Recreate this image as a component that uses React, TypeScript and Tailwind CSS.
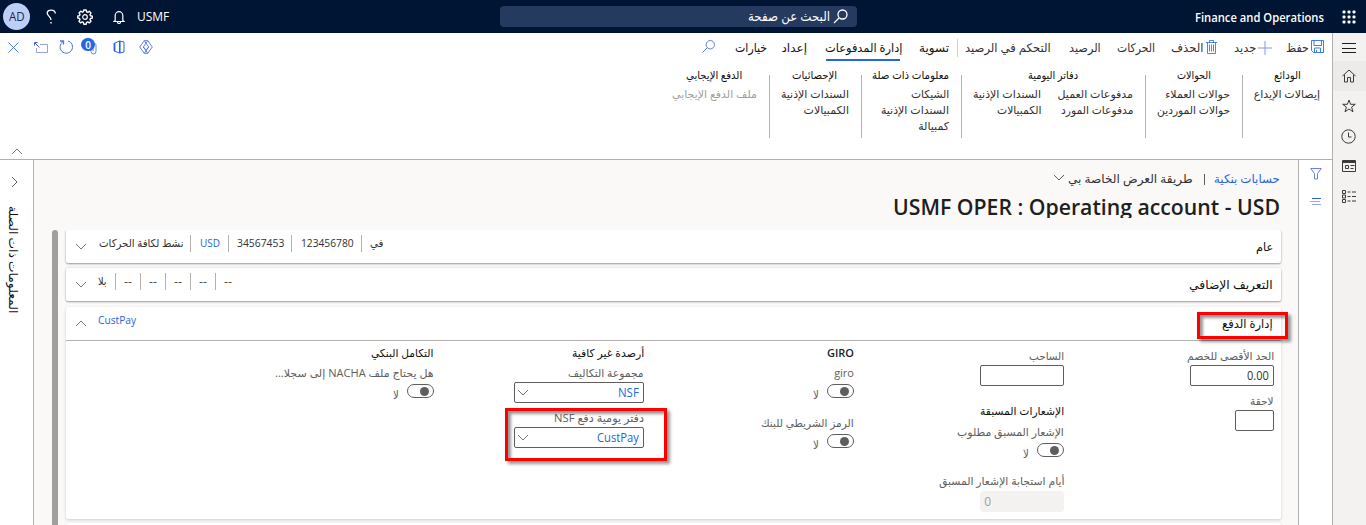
import React, { useLayoutEffect, useRef } from "react";

/** Text that is squeezed or stretched to a given width. */
function T({ w, c = "", v = false, ltr = false, children }: { w: number; c?: string; v?: boolean; ltr?: boolean; children: React.ReactNode }) {
  const ref = useRef<HTMLSpanElement>(null);
  useLayoutEffect(() => {
    const el = ref.current;
    if (!el) return;
    const n = v ? el.offsetHeight : el.offsetWidth;
    if (n) el.style.transform = v ? `scaleY(${w / n})` : `scaleX(${w / n})`;
  }, [w, v]);
  return (
    <span className={`flex shrink-0 whitespace-nowrap ${v ? "flex-row items-start" : ""} ${c}`} style={v ? { height: w } : { width: w }}>
      <span ref={ref} dir={ltr ? "ltr" : undefined} className={v ? "block shrink-0 origin-bottom" : ltr ? "block shrink-0 origin-left" : "block shrink-0 origin-right"}>
        {children}
      </span>
    </span>
  );
}

function Icon({ w, h, c = "", children }: { w: number; h: number; c?: string; children: React.ReactNode }) {
  return (
    <svg width={w} height={h} viewBox={`0 0 ${w} ${h}`} fill="none" stroke="currentColor" strokeWidth="1" className={`block shrink-0 ${c}`}>
      {children}
    </svg>
  );
}

function Chevron({ up = false, c = "text-[#797775]" }: { up?: boolean; c?: string }) {
  return (
    <Icon w={12} h={7} c={c}>
      <path d={up ? "M1 6 L6 1 L11 6" : "M1 1 L6 6 L11 1"} />
    </Icon>
  );
}

function Header() {
  return (
    <header dir="ltr" className="flex h-[33px] items-center bg-[#001433] text-white">
      <div className="ml-[3px] flex h-[27px] w-[27px] items-center justify-center rounded-full bg-[#bcd0f7] text-[13px] text-[#1b2a4a]">
        <T w={16} ltr>AD</T>
      </div>
      <Icon w={10} h={15} c="ml-4">
        <path d="M9.3 4.5 C9 0 1 0 1.2 4.3 C1.3 7 5 7.5 5 11" strokeWidth="1.3" />
        <path d="M5 13v1.5" strokeWidth="1.4" />
      </Icon>
      <Icon w={16} h={16} c="ml-[21px]">
        <circle cx="8" cy="8" r="2.3" strokeWidth="1.2" />
        <path strokeWidth="1.4" strokeLinejoin="round" d="M6.8 1h2.4l.4 1.8 1.1.5 1.6-1 1.7 1.7-1 1.6.5 1.1 1.8.4v2l-1.8.4-.5 1.1 1 1.6-1.7 1.7-1.6-1-1.1.5-.4 1.8H6.8l-.4-1.8-1.1-.5-1.6 1L2 12.2l1-1.6-.5-1.1L.8 9V7l1.700-.4L3 5.500 2 3.900 3.700 2.200l1.600 1 1.100-.5z" />
      </Icon>
      <Icon w={12} h={14} c="ml-5">
        <path d="M2.200 10.500V5.500a3.800 3.800 0 0 1 7.600 0v5l1.200 1H1z M4.500 12a1.500 1.500 0 0 0 3 0" strokeWidth="1.200" />
      </Icon>
      <div className="ml-3 mt-px text-[12px]"><T w={32} ltr>USMF</T></div>
      <div dir="rtl" className="ml-[331px] flex h-[21px] w-[357px] items-center rounded-sm bg-[#243a5e] pr-[9px] text-[13px]">
        <Icon w={15} h={15}>
          <circle cx="9.500" cy="5.500" r="4.500" strokeWidth="1.300" />
          <path d="M6 9 L1 14" strokeWidth="1.300" />
        </Icon>
        <T w={82} c="mr-[3px] mt-px">البحث عن صفحة</T>
      </div>
      <div className="ml-[338px] mt-[2px] text-[12px] font-semibold"><T w={129} ltr>Finance and Operations</T></div>
      <svg width="14" height="14" viewBox="0 0 14 14" className="ml-[18px] fill-white">
        {[0, 5, 10].map((y) => [0, 5, 10].map((x) => <rect key={`${x}-${y}`} x={x + 0.500} y={y + 0.500} width="3" height="3" rx="1" />))}
      </svg>
    </header>
  );
}

function Rail() {
  const cell = "flex h-[30px] items-center justify-center pr-[2px]";
  return (
    <nav className="w-[34px] shrink-0 border-l border-[#b3b0ad] bg-[#f3f2f1] text-[#3b3a39]">
      <div className="flex h-7 items-center justify-center pr-px">
        <Icon w={14} h={10} c="mt-[2px] text-[#201f1e]"><path d="M0 .5H14M0 5.500H14M0 9.500H14" /></Icon>
      </div>
      <div className={`${cell} bg-[#edebe9]`}>
        <Icon w={14} h={14}><path d="M.5 7 7 1l6.500 6M2.500 5.500v7.500h3V8.500h3V13h3V5.500" /></Icon>
      </div>
      <div className={cell}>
        <Icon w={14} h={14}><path d="M7 1l1.600 4.300h4.700L9.600 8.100l1.400 4.700L7 10l-4 2.800 1.400-4.700L.7 5.300h4.700z" /></Icon>
      </div>
      <div className={cell}>
        <Icon w={15} h={15}><circle cx="7.500" cy="7.500" r="6.700" /><path d="M7.500 3.500v4.500h3" /></Icon>
      </div>
      <div className={cell}>
        <Icon w={14} h={12} c="mt-[-1px]"><path d="M.5.5h13v11H.5zM.5 2.500h13M.5 1.500h13M3.500 5.500h3v3h-3zM8.500 5.500h4M8.500 8.500h3" /></Icon>
      </div>
      <div className={cell}>
        <Icon w={14} h={13}><path d="M.5.5h3v3h-3zM.5 5h3v3h-3zM.5 9.500h3v3h-3zM5.500 2h3M10 2h4M5.500 6.500h3M10 6.500h4M5.500 11h3M10 11h4" /></Icon>
      </div>
    </nav>
  );
}

function Toolbar() {
  const blue = "text-[#2266e3]";
  return (
    <div className="flex h-[29px] items-center pr-2 text-[12px] text-[#323130]">
      <Icon w={13} h={13} c={`${blue} mt-[-2px]`}><path d="M.5.5h12v12h-10l-2-2zM3 .5v5h7.500v-5M3.500 12.500V8h6v4.500M5.500 10v2.500" strokeOpacity=".85" /></Icon>
      <T w={23} c="mr-[2px]">حفظ</T>
      <Icon w={14} h={14} c="mr-[14px] text-[#7f94ee]"><path d="M7 0v14M0 7h14" /></Icon>
      <T w={22} c="mr-[2px]">جديد</T>
      <Icon w={11} h={14} c={`${blue} mr-[17px] mt-[-2px]`}><path d="M0 2.500h11M3.500 2.500v-2h4v2M1.500 2.500v11h8v-11M3.500 4.500v7M5.500 4.500v7M7.500 4.500v7" strokeOpacity=".8" /></Icon>
      <T w={32} c="mr-[3px]">الحذف</T>
      <T w={38} c="mr-4">الحركات</T>
      <T w={32} c="mr-4">الرصيد</T>
      <T w={86} c="mr-[18px]">التحكم في الرصيد</T>
      <div className="mr-[7px] h-[18px] w-px bg-[#d2d0ce]" />
      <div className="flex h-full items-center font-medium text-[#11100f]">
        <T w={30} c="mr-[8px]">تسوية</T>
        <div className="mr-[17px] flex h-full w-[78px] flex-col justify-between pt-[6px]">
          <T w={78}>إدارة المدفوعات</T>
          <div className="mx-[2px] mb-px h-[2px] shrink-0 bg-[#2266e3]" />
        </div>
        <T w={25} c="mr-[17px]">إعداد</T>
        <T w={32} c="mr-[15px]">خيارات</T>
      </div>
      <Icon w={13} h={13} c="mr-5 mt-[-2px] text-[#5b7de8]"><circle cx="8.300" cy="4.700" r="4.200" /><path d="M5.200 7.800.5 12.500" /></Icon>
      <div dir="ltr" className={`ml-[8px] mr-auto flex h-full items-center pb-px ${blue}`}>
        <Icon w={11} h={11} c="text-[#4a78e6]"><path d="M.5.5l10 10M10.500.5l-10 10" /></Icon>
        <Icon w={14} h={11} c="ml-[15px] text-[#93a0ec]"><path d="M6 2.500h7.500v8H2.500V6" /><path d="M.5 3.500v-3h3M.8.8l4.700 4.700" className="text-[#4a5fe0]" stroke="currentColor" /></Icon>
        <Icon w={14} h={14} c="ml-[11px] text-[#4a78e6]"><path d="M9 .9a6.300 6.300 0 1 1-5 .7" /><path d="M1 1h3.500v3.500" strokeWidth="1.300" /></Icon>
        <div className="relative ml-2 h-[16px] w-[16px]">
          <Icon w={7} h={13} c="ml-[9px] mt-[3px] text-[#5f8be8]"><path d="M1 2v7.500a2.500 2.500 0 0 0 5 0V3a1.500 1.500 0 0 0-3 0v6" /></Icon>
          <span className="absolute left-0 top-[-1px] flex h-[13px] w-[14px] items-center justify-center rounded-full bg-[#2266e3] text-[10px] font-semibold leading-none text-white">0</span>
        </div>
        <Icon w={12} h={14} c="ml-4"><path d="M1 3.500 6.500 1v12L1 11M6.500 1l4.500 1v10l-4.500 1" /><path d="M1.500 3v8" strokeWidth="1.800" /><path d="M7 1.200v11.600" strokeWidth="1.200" /></Icon>
        <Icon w={14} h={14} c="ml-[14px] text-[#5574e0]"><path strokeLinejoin="round" d="M5.200.7h3.600L13.300 7l-4.500 6.300H5.200L.7 7zM5.200.7 9.700 7 7 9.900 4.300 7 8.800.7M9.700 7l-4.500 6.300M4.300 7l4.500 6.300" strokeWidth=".9" /></Icon>
      </div>
    </div>
  );
}

type Item = [string, number];
const groups: { title: Item; width: string; cols: Item[][]; muted?: boolean }[] = [
  { title: ["الودائع", 27], width: "w-[66px]", cols: [[["إيصالات الإيداع", 66]]] },
  { title: ["الحوالات", 34], width: "w-[73px]", cols: [[["حوالات العملاء", 65], ["حوالات الموردين", 73]]] },
  { title: ["دفاتر اليومية", 50], width: "w-[160px]", cols: [[["مدفوعات العميل", 75], ["مدفوعات المورد", 72]], [["السندات الإذنية", 68], ["الكمبيالات", 44]]] },
  { title: ["معلومات ذات صلة", 77], width: "w-[76px]", cols: [[["الشيكات", 38], ["السندات الإذنية", 68], ["كمبيالة", 31]]] },
  { title: ["الإحصائيات", 45], width: "w-[68px]", cols: [[["السندات الإذنية", 68], ["الكمبيالات", 45]]] },
  { title: ["الدفع الإيجابي", 56], width: "w-[85px]", muted: true, cols: [[["ملف الدفع الإيجابي", 85]]] },
];

function Groups() {
  return (
    <div className="flex pr-3 pt-[5px] text-[11px] leading-4 text-[#323130]">
      {groups.map((g, i) => (
        <React.Fragment key={g.title[0]}>
          {i > 0 && <div className="ml-3 mr-[11px] mt-2 h-[63px] w-px shrink-0 bg-[#b3b0ad]" />}
          <div className={`flex shrink-0 flex-col ${g.width}`}>
            <div className="mb-[3px] flex justify-center font-medium text-[#11100f]"><T w={g.title[1]}>{g.title[0]}</T></div>
            <div className="flex justify-between">
              {g.cols.map((col, j) => (
                <div key={j} className={`flex flex-col ${g.muted ? "text-[#a19f9d]" : ""}`}>
                  {col.map(([t, w]) => <T key={t} w={w}>{t}</T>)}
                </div>
              ))}
            </div>
          </div>
        </React.Fragment>
      ))}
    </div>
  );
}

const Sep = () => <div className="h-[17px] w-px shrink-0 bg-[#b3b0ad]" />;

function Toggle() {
  return (
    <div className="flex h-[15px] items-start">
      <div className="flex h-[14px] w-[27px] shrink-0 items-center rounded-full border border-[#605e5c] bg-white pr-1">
        <div className="h-[9px] w-[9px] rounded-full bg-[#605e5c]" />
      </div>
      <T w={6} c="mr-[8px] mt-[3px] text-[12px] leading-4 text-[#605e5c]">لا</T>
    </div>
  );
}

const labelBase = "items-center text-[11px] text-[#605e5c]";
const labelCls = `h-5 leading-5 ${labelBase}`;
const fieldLabelCls = `h-[19px] leading-[19px] ${labelBase}`;
const headCls = "h-5 items-center text-[11px] leading-5 font-medium text-[#11100f]";

function Select({ children, w }: { children: string; w: number }) {
  return (
    <div className="flex h-[21px] w-[130px] items-center justify-between rounded-[2px] border border-[#605e5c] bg-white pl-[2px] pr-1 text-[12px] leading-4 text-[#2266e3]">
      <T w={w}>{children}</T>
      <Chevron />
    </div>
  );
}

function Form() {
  const col = "flex w-[210px] shrink-0 flex-col";
  const input = "flex h-[21px] items-center rounded-[2px] border border-[#605e5c] px-1 text-[12px]";
  return (
    <div className="flex pr-[7px]">
      <div className={`${col} pt-[5px]`}>
        <T w={87} c={fieldLabelCls}>الحد الأقصى للخصم</T>
        <div className={`${input} w-[84px] text-[#323130]`}><T w={22}>0.00</T></div>
        <T w={24} c={`${fieldLabelCls} mt-[5px]`}>لاحقة</T>
        <div className={`${input} w-[39px]`} />
      </div>
      <div className={`${col} pt-[5px]`}>
        <T w={35} c={fieldLabelCls}>الساحب</T>
        <div className={`${input} w-[84px]`} />
        <T w={84} c={`${headCls} mt-[15px]`}>الإشعارات المسبقة</T>
        <T w={107} c={`${labelCls} mt-[1px]`}>الإشعار المسبق مطلوب</T>
        <div className="mt-px"><Toggle /></div>
        <T w={125} c={`${labelCls} mt-[13px]`}>أيام استجابة الإشعار المسبق</T>
        <div className="flex h-[21px] w-[84px] items-center justify-end rounded-sm bg-[#f3f2f1] pl-1 text-[12px] text-[#a19f9d]"><T w={7}>0</T></div>
      </div>
      <div className={`${col} pt-[2px]`}>
        <T w={27} c="h-5 items-center text-[11px] leading-5 font-semibold text-[#201f1e]">GIRO</T>
        <T w={20} c={labelCls}>giro</T>
        <div className="mt-px"><Toggle /></div>
        <T w={93} c={`${labelCls} mt-[14px]`}>الرمز الشريطي للبنك</T>
        <div className="mt-px"><Toggle /></div>
      </div>
      <div className={`${col} pt-[2px]`}>
        <T w={72} c={headCls}>أرصدة غير كافية</T>
        <T w={76} c={fieldLabelCls}>مجموعة التكاليف</T>
        <Select w={21}>NSF</Select>
        <T w={90} c={`${fieldLabelCls} mt-[5px]`}>دفتر يومية دفع NSF</T>
        <Select w={42}>CustPay</Select>
      </div>
      <div className={`${col} pt-[2px]`}>
        <T w={63} c={headCls}>التكامل البنكي</T>
        <T w={159} c={labelCls}>هل يحتاج ملف NACHA إلى سجلا...</T>
        <div className="mt-px"><Toggle /></div>
      </div>
    </div>
  );
}

const cardCls = "shrink-0 rounded-[2px] bg-white shadow-[0_1px_2px_rgba(0,0,0,0.35),0_0_3px_rgba(0,0,0,0.1)]";
const softCardCls = "shrink-0 rounded-[2px] bg-white shadow-[0_1px_3px_rgba(0,0,0,0.18)]";

function CardHead({ title, w, up = false, children }: { title: string; w: number; up?: boolean; children: React.ReactNode }) {
  return (
    <div className="flex h-[33px] items-center pl-[9px] pr-2">
      <T w={w} c="text-[12px] font-medium text-[#11100f]">{title}</T>
      <div dir="ltr" className="mr-auto flex items-center">
        <Chevron up={up} />
        <div className="ml-[11px] flex items-center pb-[7px] text-[11px] text-[#323130]">{children}</div>
      </div>
    </div>
  );
}

function Body() {
  return (
    <main className="relative flex min-w-0 flex-1 flex-col bg-[#faf9f8]">
      <div className="mt-[9px] flex h-5 items-center pr-[18px] text-[12px] text-[#323130]">
        <T w={66} c="text-[#2266e3]">حسابات بنكية</T>
        <div className="mr-[9px] h-[11px] w-px bg-[#605e5c]" />
        <T w={125} c="mr-[11px]">طريقة العرض الخاصة بي</T>
        <Chevron c="mr-[3px] mt-[-3px] text-[#605e5c]" />
      </div>
      <h1 className="mb-[7px] flex h-[29px] items-start overflow-y-clip pr-[18px] text-[21px] font-semibold leading-9 text-[#201f1e]">
        <T w={387}>USMF OPER : Operating account - USD</T>
      </h1>
      <div dir="ltr" className="mt-[5px] flex min-h-0 flex-1 overflow-hidden pl-[18px]">
        <div className="w-[6px] shrink-0 rounded-t-full bg-[#a19f9d]" />
        <div dir="rtl" className="ml-2 flex w-[1215px] flex-col">
          <section className={cardCls}>
            <CardHead title="عام" w={17}>
              <span dir="rtl"><T w={85}>نشط لكافة الحركات</T></span>
              <span className="w-[7px]" /><Sep /><span className="w-[9px]" />
              <span dir="rtl" className="text-[#2266e3]"><T w={20}>USD</T></span>
              <span className="w-2" /><Sep /><span className="w-2" />
              <span dir="rtl"><T w={47}>34567453</T></span>
              <span className="w-[7px]" /><Sep /><span className="w-[9px]" />
              <span dir="rtl"><T w={53}>123456780</T></span>
              <span className="w-[7px]" /><Sep /><span className="w-2" />
              <span dir="rtl"><T w={13}>في</T></span>
            </CardHead>
          </section>
          <section className={`${cardCls} mt-[5px]`}>
            <CardHead title="التعريف الإضافي" w={84}>
              <span dir="rtl"><T w={9}>بلا</T></span>
              {[0, 1, 2, 3, 4].map((k) => (
                <React.Fragment key={k}>
                  <span className="w-2" /><Sep /><span className="w-2" />
                  <span dir="rtl"><T w={8}>--</T></span>
                </React.Fragment>
              ))}
            </CardHead>
          </section>
          <section className={`${softCardCls} mt-[6px] h-[212px]`}>
            <div className="border-b border-[#b3b0ad]">
              <CardHead title="إدارة الدفع" w={51} up>
                <span dir="rtl" className="text-[#2266e3]"><T w={38}>CustPay</T></span>
              </CardHead>
            </div>
            <Form />
          </section>
          <section className={`${softCardCls} mt-1 h-10`} />
        </div>
      </div>
      <div className="absolute left-[1163px] top-[152px] h-[27px] w-[91px] border-[3px] border-[#ff0000] shadow-[3px_3px_3px_rgba(0,0,0,0.4),inset_3px_3px_3px_rgba(0,0,0,0.4)]" />
      <div className="absolute left-[471px] top-[248px] h-[53px] w-[162px] border-[3px] border-[#ff0000] shadow-[3px_3px_3px_rgba(0,0,0,0.4),inset_3px_3px_3px_rgba(0,0,0,0.4)]" />
    </main>
  );
}

export default function App() {
  return (
    <div dir="rtl" className="flex h-[525px] w-[1366px] flex-col overflow-hidden bg-white font-['Open_Sans','DejaVu_Sans',sans-serif]">
      <Header />
      <div className="flex min-h-0 flex-1">
        <Rail />
        <div className="flex min-w-0 flex-1 flex-col">
          <div className="flex h-[127px] shrink-0 flex-col border-b border-[#b3b0ad]">
            <Toolbar />
            <Groups />
            <div className="mb-1 ml-[11px] mr-auto mt-auto"><Chevron up /></div>
          </div>
          <div className="flex min-h-0 flex-1">
            <aside className="flex w-[34px] shrink-0 flex-col items-center border-l border-[#b3b0ad] pt-2 text-[#6b80e8]">
              <Icon w={12} h={12}><path d="M.7.5h10.600L7.500 5.500v5.500h-3V5.500z" /></Icon>
              <Icon w={12} h={9} c="mt-[17px]"><path d="M2 1.500h9" className="text-[#2f5fe6]" stroke="currentColor" /><path d="M0 4.500h10M2 7.500h9" strokeOpacity=".7" /></Icon>
            </aside>
            <Body />
            <aside className="flex w-[34px] shrink-0 flex-col items-center border-r border-[#b3b0ad] pr-[5px] pt-4">
              <Icon w={7} h={12} c="text-[#605e5c]"><path d="M1 1l5 5-5 5" /></Icon>
              <div className="mr-[2px] mt-[18px] text-[12px] font-medium leading-[14px] text-[#11100f] [writing-mode:vertical-rl]">
                <T w={107} v>المعلومات ذات الصلة</T>
              </div>
            </aside>
          </div>
        </div>
      </div>
    </div>
  );
}
